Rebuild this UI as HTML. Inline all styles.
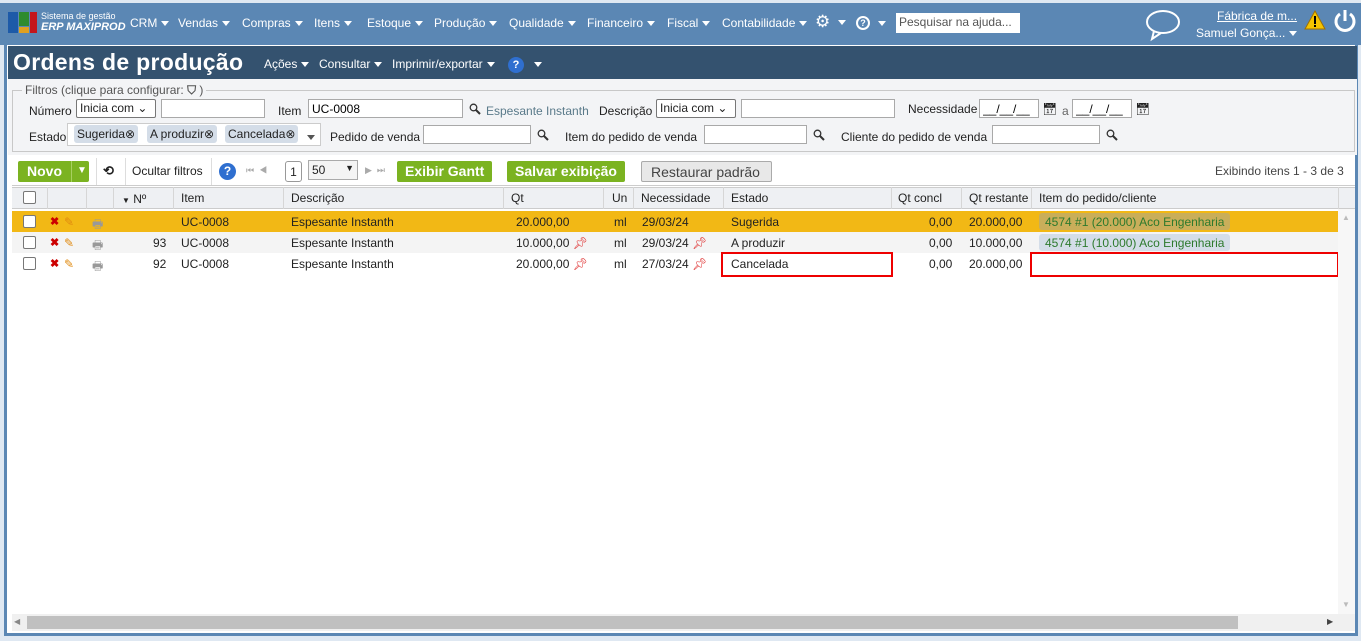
<!DOCTYPE html>
<html><head><meta charset="utf-8"><style>
*{box-sizing:border-box;margin:0;padding:0}
body{width:1361px;height:641px;overflow:hidden;background:#dfe8f2;font-family:"Liberation Sans",sans-serif;font-size:12px;color:#222;position:relative}
.a{position:absolute;white-space:nowrap}
.nav{left:0;top:3px;width:1361px;height:42px;background:#5b87b4}
.tri{display:inline-block;width:0;height:0;border-left:4px solid transparent;border-right:4px solid transparent;border-top:5px solid #fff;vertical-align:middle;margin-left:4px}
.frame{left:4px;top:45px;width:1354px;height:591px;background:#fff;border:3px solid #5b87b4;border-top:0}
.title{left:8px;top:46px;width:1349px;height:33px;background:#34526f}
.filt{left:8px;top:79px;width:1349px;height:76px;background:#f3f4f6}
input.t{position:absolute;height:19px;border:1px solid #a9a9a9;background:#fff;font:12px "Liberation Sans",sans-serif;padding-left:3px}
.sel{position:absolute;height:19px;border:1px solid #777;background:#fff;font-size:12px;padding:1px 3px;border-radius:2px}
.chip{position:absolute;top:125px;height:18px;background:#d4dde8;border-radius:3px;padding:2px 3px;font-size:12px}
.btn{position:absolute;top:161px;height:21px;background:#7bb321;color:#fff;font-weight:bold;font-size:14px;padding:2px 8px;border-radius:2px}
.hdr{left:12px;top:187px;width:1343px;height:22px;background:#eef0f3;border-bottom:1px solid #ccc;border-top:1px solid #ccc}
.row{left:12px;width:1326px;height:21px}
.c{position:absolute;top:4px;white-space:nowrap}
.vl{position:absolute;top:0;width:1px;height:100%;background:#d6d6d6}
.cb{position:absolute;width:13px;height:13px;border:1px solid #777;border-radius:2px;background:#fff}
.x{color:#c00;font-weight:bold;font-size:11px}
.tag{position:absolute;top:2px;height:17px;border-radius:3px;padding:2px 6px;color:#2d7a2d}
.red{position:absolute;border:2px solid #e00}
</style></head><body>
<svg width="0" height="0" style="position:absolute"><defs><symbol id="mg" viewBox="0 0 12 12"><circle cx="4.5" cy="4.5" r="3.3" fill="none" stroke="#333" stroke-width="1.3"/><line x1="7" y1="7" x2="11" y2="11" stroke="#333" stroke-width="2"/></symbol></defs></svg>
<div class="a nav"></div>
<div class="a" style="left:8px;top:12px;width:10px;height:21px;background:#1d5aa8"></div>
<div class="a" style="left:19px;top:12px;width:10px;height:14px;background:#2e8b2e"></div>
<div class="a" style="left:19px;top:27px;width:10px;height:6px;background:#e0a020"></div>
<div class="a" style="left:30px;top:12px;width:7px;height:21px;background:#c4161c"></div>
<div class="a" style="left:41px;top:11px;color:#fff;font-size:9px;line-height:11px">Sistema de gestão<br><i style="font-size:11px;font-weight:bold">ERP MAXIPROD</i></div>
<div class="a" style="left:130px;top:16px;color:#fff">CRM<span class="tri"></span></div>
<div class="a" style="left:178px;top:16px;color:#fff">Vendas<span class="tri"></span></div>
<div class="a" style="left:242px;top:16px;color:#fff">Compras<span class="tri"></span></div>
<div class="a" style="left:314px;top:16px;color:#fff">Itens<span class="tri"></span></div>
<div class="a" style="left:367px;top:16px;color:#fff">Estoque<span class="tri"></span></div>
<div class="a" style="left:434px;top:16px;color:#fff">Produção<span class="tri"></span></div>
<div class="a" style="left:509px;top:16px;color:#fff">Qualidade<span class="tri"></span></div>
<div class="a" style="left:587px;top:16px;color:#fff">Financeiro<span class="tri"></span></div>
<div class="a" style="left:667px;top:16px;color:#fff">Fiscal<span class="tri"></span></div>
<div class="a" style="left:722px;top:16px;color:#fff">Contabilidade<span class="tri"></span></div>
<div class="a" style="left:815px;top:12px;color:#fff;font-size:17px">⚙<span class="tri" style="margin-left:8px"></span></div>
<div class="a" style="left:856px;top:16px;width:14px;height:14px;border:2px solid #fff;border-radius:50%;color:#fff;font-size:9px;text-align:center;line-height:10px;font-weight:bold">?</div>
<div class="a" style="left:874px;top:16px"><span class="tri"></span></div>
<div class="a" style="left:896px;top:13px;width:124px;height:20px;background:#fff;color:#555;padding:2px 3px">Pesquisar na ajuda...</div>
<svg class="a" style="left:1144px;top:8px" width="38" height="34"><ellipse cx="19" cy="14" rx="16" ry="11" fill="none" stroke="#fff" stroke-width="2"/><path d="M10 23 L8 31 L17 25" fill="none" stroke="#fff" stroke-width="2"/></svg>
<div class="a" style="left:1217px;top:9px;color:#fff;text-decoration:underline">Fábrica de m...</div>
<div class="a" style="left:1196px;top:26px;color:#fff">Samuel Gonça...<span class="tri"></span></div>
<svg class="a" style="left:1304px;top:10px" width="22" height="20"><path d="M11 1 L21 19 L1 19Z" fill="#f5c400" stroke="#a07000"/><rect x="10" y="6" width="2" height="8" fill="#000"/><rect x="10" y="15" width="2" height="2" fill="#000"/></svg>
<svg class="a" style="left:1333px;top:9px" width="24" height="24"><path d="M7 5 A9 9 0 1 0 17 5" fill="none" stroke="#fff" stroke-width="3"/><line x1="12" y1="1" x2="12" y2="12" stroke="#fff" stroke-width="3"/></svg>

<div class="a frame"></div>
<div class="a title"></div>
<div class="a" style="left:13px;top:49px;color:#fff;font-size:23px;font-weight:bold;letter-spacing:0.3px">Ordens de produção</div>
<div class="a" style="left:264px;top:57px;color:#fff">Ações<span class="tri"></span></div>
<div class="a" style="left:319px;top:57px;color:#fff">Consultar<span class="tri"></span></div>
<div class="a" style="left:392px;top:57px;color:#fff">Imprimir/exportar<span class="tri"></span></div>
<div class="a" style="left:508px;top:57px;width:16px;height:16px;border-radius:50%;background:#2f6fd0;color:#fff;font-size:11px;font-weight:bold;text-align:center;line-height:16px">?</div>
<div class="a" style="left:530px;top:57px"><span class="tri"></span></div>

<div class="a filt"></div>
<div class="a" style="left:12px;top:90px;width:1343px;height:62px;border:1px solid #c8c8c8"></div>
<div class="a" style="left:22px;top:83px;background:#f3f4f6;color:#555;padding:0 3px">Filtros (clique para configurar: <b>⛉</b> )</div>
<div class="a" style="left:29px;top:104px">Número</div>
<div class="sel" style="left:76px;top:99px;width:80px">Inicia com ⌄</div>
<input class="t" style="left:161px;top:99px;width:104px">
<div class="a" style="left:278px;top:104px">Item</div>
<input class="t" style="left:308px;top:99px;width:155px" value="UC-0008">
<svg class="a" style="left:469px;top:103px" width="12" height="12"><use href="#mg"/></svg>
<div class="a" style="left:486px;top:104px;color:#5a7a8a">Espesante Instanth</div>
<div class="a" style="left:599px;top:104px">Descrição</div>
<div class="sel" style="left:656px;top:99px;width:80px">Inicia com ⌄</div>
<input class="t" style="left:741px;top:99px;width:154px">
<div class="a" style="left:908px;top:102px">Necessidade</div>
<input class="t" style="left:979px;top:99px;width:60px" value="__/__/__">
<div class="a" style="left:1042px;top:102px">📅︎</div>
<div class="a" style="left:1062px;top:104px;color:#666">a</div>
<input class="t" style="left:1072px;top:99px;width:60px" value="__/__/__">
<div class="a" style="left:1135px;top:102px">📅︎</div>
<div class="a" style="left:29px;top:130px">Estado</div>
<div class="a" style="left:67px;top:123px;width:254px;height:23px;border:1px solid #ccc;background:#fff"></div>
<div class="chip" style="left:74px">Sugerida⊗</div>
<div class="chip" style="left:147px">A produzir⊗</div>
<div class="chip" style="left:225px">Cancelada⊗</div>
<div class="a" style="left:303px;top:130px"><span class="tri" style="border-top-color:#555"></span></div>
<div class="a" style="left:330px;top:130px">Pedido de venda</div>
<input class="t" style="left:423px;top:125px;width:108px">
<svg class="a" style="left:537px;top:129px" width="12" height="12"><use href="#mg"/></svg>
<div class="a" style="left:565px;top:130px">Item do pedido de venda</div>
<input class="t" style="left:704px;top:125px;width:103px">
<svg class="a" style="left:813px;top:129px" width="12" height="12"><use href="#mg"/></svg>
<div class="a" style="left:841px;top:130px">Cliente do pedido de venda</div>
<input class="t" style="left:992px;top:125px;width:108px">
<svg class="a" style="left:1106px;top:129px" width="12" height="12"><use href="#mg"/></svg>

<div class="a" style="left:12px;top:157px;width:1343px;height:29px;border-bottom:1px solid #ccc"></div>
<div class="btn" style="left:18px;width:71px;padding-left:9px">Novo<span style="position:absolute;left:53px;top:0;height:21px;border-left:1px solid #a8d060;font-size:10px;padding:4px 0 0 5px">▼</span></div>
<div class="a" style="left:96px;top:158px;width:1px;height:27px;background:#ddd"></div>
<div class="a" style="left:103px;top:163px;font-size:13px;font-weight:bold">⟲</div>
<div class="a" style="left:125px;top:158px;width:1px;height:27px;background:#ddd"></div>
<div class="a" style="left:132px;top:164px">Ocultar filtros</div>
<div class="a" style="left:211px;top:158px;width:1px;height:27px;background:#ddd"></div>
<div class="a" style="left:219px;top:163px;width:17px;height:17px;border-radius:50%;background:#2f6fd0;color:#fff;font-weight:bold;text-align:center;line-height:17px">?</div>
<div class="a" style="left:246px;top:165px;color:#aaa;font-size:9px">⏮ &nbsp;◀</div>
<div class="a" style="left:285px;top:161px;width:17px;height:21px;border:1px solid #999;border-radius:3px;background:#fff;text-align:center;padding-top:3px">1</div>
<div class="a" style="left:308px;top:160px;width:50px;height:20px;border:1px solid #aaa;background:#f4f4f4;padding:2px 3px">50 <span style="float:right;font-size:9px">▼</span></div>
<div class="a" style="left:365px;top:165px;color:#aaa;font-size:9px">▶ &nbsp;⏭</div>
<div class="btn" style="left:397px">Exibir Gantt</div>
<div class="btn" style="left:507px">Salvar exibição</div>
<div class="a" style="left:641px;top:161px;height:21px;width:131px;border:1px solid #aaa;border-radius:2px;background:#e8e8e8;color:#444;font-size:14px;padding:2px 9px">Restaurar padrão</div>
<div class="a" style="left:1215px;top:164px;color:#444">Exibindo itens 1 - 3 de 3</div>

<div class="a hdr"></div>
<div class="a" style="left:12px;top:187px;width:1343px;height:22px">
<div class="cb" style="left:11px;top:4px"></div>
<div class="vl" style="left:35px"></div><div class="vl" style="left:74px"></div><div class="vl" style="left:101px"></div><div class="vl" style="left:161px"></div><div class="vl" style="left:271px"></div><div class="vl" style="left:491px"></div><div class="vl" style="left:591px"></div><div class="vl" style="left:621px"></div><div class="vl" style="left:711px"></div><div class="vl" style="left:879px"></div><div class="vl" style="left:949px"></div><div class="vl" style="left:1019px"></div><div class="vl" style="left:1326px"></div>
<div class="c" style="left:110px;top:5px"><span style="font-size:8px">▼</span> Nº</div>
<div class="c" style="left:169px">Item</div><div class="c" style="left:279px">Descrição</div><div class="c" style="left:499px">Qt</div><div class="c" style="left:600px">Un</div><div class="c" style="left:629px">Necessidade</div><div class="c" style="left:719px">Estado</div><div class="c" style="left:886px">Qt concl</div><div class="c" style="left:957px">Qt restante</div><div class="c" style="left:1027px">Item do pedido/cliente</div>
</div>

<div class="a row" style="top:211px;background:#f2b815">
<div class="cb" style="left:11px;top:4px"></div>
<div class="c x" style="left:38px">✖</div><div class="c" style="left:52px;color:#e08a10">✎</div><div class="c" style="left:80px;color:#999">🖶︎</div>
<div class="c" style="left:169px">UC-0008</div><div class="c" style="left:279px">Espesante Instanth</div><div class="c" style="left:504px">20.000,00</div><div class="c" style="left:602px">ml</div><div class="c" style="left:630px">29/03/24</div><div class="c" style="left:719px">Sugerida</div><div class="c" style="left:917px">0,00</div><div class="c" style="left:957px">20.000,00</div>
<div class="tag" style="left:1027px;background:#c9ae5a">4574 #1 (20.000) Aco Engenharia</div>
</div>
<div class="a row" style="top:232px;background:#f4f4f4">
<div class="cb" style="left:11px;top:4px"></div>
<div class="c x" style="left:38px">✖</div><div class="c" style="left:52px;color:#e08a10">✎</div><div class="c" style="left:80px;color:#999">🖶︎</div>
<div class="c" style="left:141px">93</div><div class="c" style="left:169px">UC-0008</div><div class="c" style="left:279px">Espesante Instanth</div><div class="c" style="left:504px">10.000,00 <span style="color:#d22">📌︎</span></div><div class="c" style="left:602px">ml</div><div class="c" style="left:630px">29/03/24 <span style="color:#d22">📌︎</span></div><div class="c" style="left:719px">A produzir</div><div class="c" style="left:917px">0,00</div><div class="c" style="left:957px">10.000,00</div>
<div class="tag" style="left:1027px;background:#d4dde8">4574 #1 (10.000) Aco Engenharia</div>
</div>
<div class="a row" style="top:253px;background:#fff">
<div class="cb" style="left:11px;top:4px"></div>
<div class="c x" style="left:38px">✖</div><div class="c" style="left:52px;color:#e08a10">✎</div><div class="c" style="left:80px;color:#999">🖶︎</div>
<div class="c" style="left:141px">92</div><div class="c" style="left:169px">UC-0008</div><div class="c" style="left:279px">Espesante Instanth</div><div class="c" style="left:504px">20.000,00 <span style="color:#d22">📌︎</span></div><div class="c" style="left:602px">ml</div><div class="c" style="left:630px">27/03/24 <span style="color:#d22">📌︎</span></div><div class="c" style="left:719px">Cancelada</div><div class="c" style="left:917px">0,00</div><div class="c" style="left:957px">20.000,00</div>
</div>
<div class="red" style="left:721px;top:252px;width:172px;height:25px"></div>
<div class="red" style="left:1030px;top:252px;width:309px;height:25px"></div>

<div class="a" style="left:1338px;top:209px;width:17px;height:405px;background:#f7f7f7"></div>
<div class="a" style="left:1342px;top:213px;color:#bbb;font-size:8px">▲</div>
<div class="a" style="left:1342px;top:600px;color:#bbb;font-size:8px">▼</div>
<div class="a" style="left:12px;top:614px;width:1343px;height:17px;background:#f0f0f0"></div>
<div class="a" style="left:27px;top:616px;width:1211px;height:13px;background:#c0c0c0"></div>
<div class="a" style="left:14px;top:617px;color:#888;font-size:8px">◀</div>
<div class="a" style="left:1327px;top:617px;color:#444;font-size:8px">▶</div>
</body></html>
